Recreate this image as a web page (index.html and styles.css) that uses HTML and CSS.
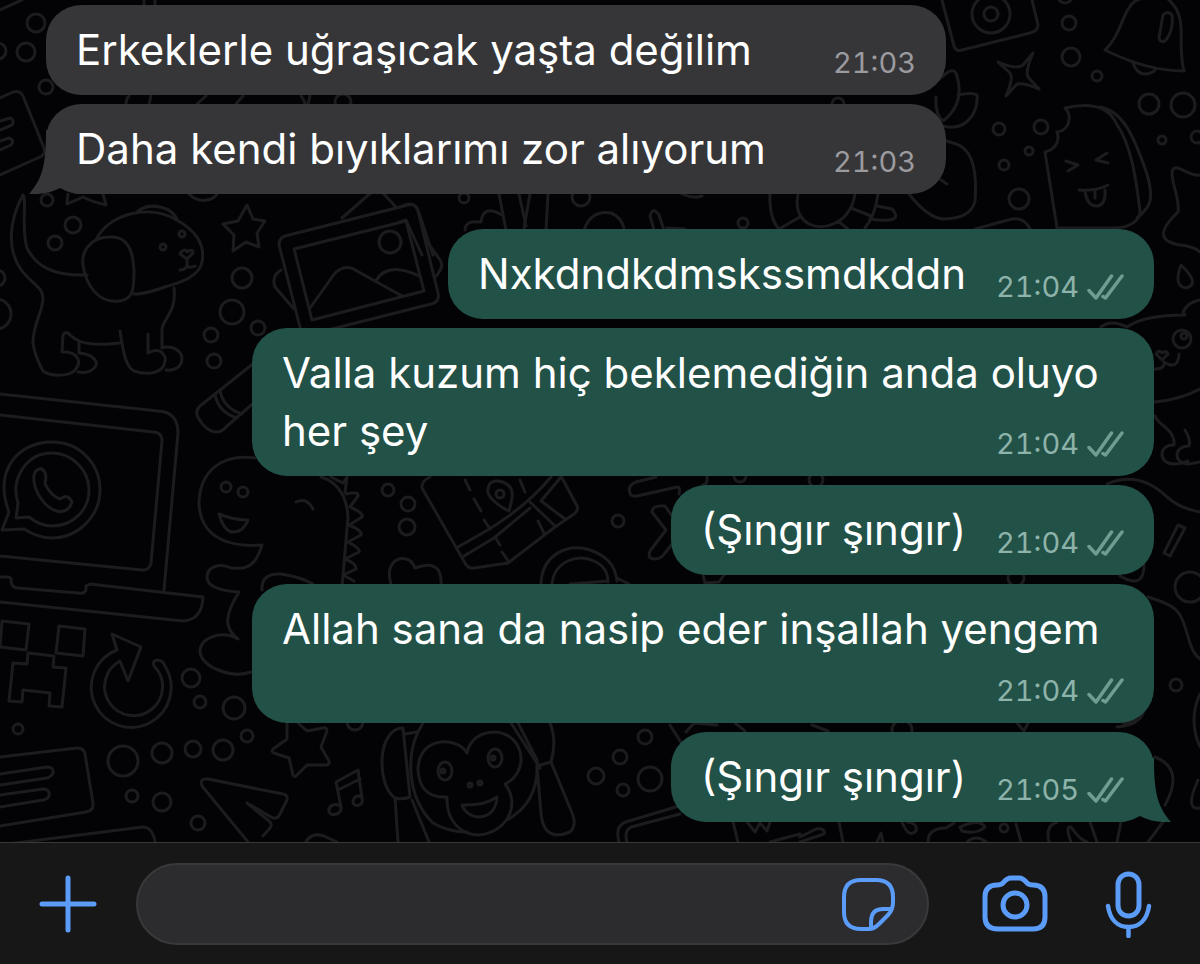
FILE: index.html
```html
<!DOCTYPE html>
<html lang="tr">
<head>
    <meta charset="UTF-8">
    <meta name="viewport" content="width=device-width, initial-scale=1.0">
    <title>Sohbet</title>
    <link rel="stylesheet" href="styles.css">
</head>
<body>
    <svg class="shapes" width="0" height="0" aria-hidden="true">
        <symbol id="checks" viewBox="0 0 38 26">
            <path d="M3 16.500l7 7.500L25.500 2M17 22.500l2.500 1.500L36 2" fill="none" stroke="currentColor" stroke-width="3.500" stroke-linecap="round" stroke-linejoin="round"/>
        </symbol>
        <symbol id="tail" viewBox="0 0 60 64">
            <path d="M17 0C17 34 14 48 0 64Q18 65 31 58Q42 64 52 64L30 30V0Z"/>
        </symbol>
    </svg>

    <main class="chat">
        <!-- Doodle wallpaper -->
        <svg class="wallpaper" viewBox="0 0 1200 842" preserveAspectRatio="xMidYMax slice" aria-hidden="true">
            <!-- dots -->
            <g>
                <circle cx="36" cy="23" r="9"/><circle cx="26" cy="52" r="9"/><circle cx="-2" cy="51" r="8"/><circle cx="46" cy="87" r="7"/>
                <circle cx="47" cy="200" r="6"/><circle cx="73" cy="225" r="8"/><circle cx="55" cy="243" r="7"/>
                <circle cx="242" cy="278" r="10"/><circle cx="232" cy="312" r="12"/><circle cx="258" cy="328" r="7"/><circle cx="211" cy="335" r="7"/><circle cx="214" cy="361" r="7"/>
                <circle cx="-3" cy="278" r="8"/><circle cx="-4" cy="314" r="15"/>
                <circle cx="388" cy="490" r="6"/><circle cx="408" cy="504" r="7"/><circle cx="407" cy="527" r="8"/><circle cx="618" cy="521" r="6"/>
                <circle cx="191" cy="678" r="9"/><circle cx="200" cy="702" r="6"/><circle cx="234" cy="708" r="11"/><circle cx="247" cy="736" r="6"/>
                <circle cx="123" cy="761" r="15"/><circle cx="162" cy="753" r="10"/><circle cx="193" cy="749" r="8"/><circle cx="223" cy="750" r="10"/>
                <circle cx="132" cy="796" r="6"/><circle cx="162" cy="802" r="9"/><circle cx="198" cy="823" r="7"/><circle cx="18" cy="729" r="5"/>
                <circle cx="596" cy="776" r="8"/><circle cx="620" cy="757" r="7"/><circle cx="645" cy="737" r="7"/><circle cx="623" cy="790" r="6"/><circle cx="650" cy="779" r="12"/>
                <circle cx="464" cy="198" r="5"/><circle cx="581" cy="197" r="9"/><circle cx="743" cy="223" r="5"/>
                <circle cx="1065" cy="-4" r="7"/><circle cx="1069" cy="23" r="7"/><circle cx="1071" cy="57" r="9"/><circle cx="1097" cy="76" r="5"/>
                <circle cx="1149" cy="104" r="10"/><circle cx="1183" cy="105" r="12"/><circle cx="1162" cy="140" r="4"/><circle cx="1197" cy="137" r="6"/>
                <circle cx="999" cy="129" r="6"/><circle cx="1041" cy="127" r="7"/><circle cx="1029" cy="151" r="4"/><circle cx="1004" cy="165" r="5"/><circle cx="1019" cy="199" r="10"/>
                <circle cx="1190" cy="587" r="15"/><circle cx="1176" cy="685" r="6"/><circle cx="1004" cy="828" r="4"/>
                <circle cx="816" cy="480" r="7"/><circle cx="740" cy="476" r="6"/><circle cx="1016" cy="578" r="8"/><circle cx="343" cy="102" r="8"/><circle cx="838" cy="104" r="6"/>
                <circle cx="355" cy="722" r="8"/><circle cx="902" cy="730" r="10"/>
            </g>
            <!-- notes and cards on the left edge -->
            <path d="M0 98L13 92q7-2 10 4l21 52q2 6-4 9L0 175M0 121l10-3q5 2 2 7L0 130M0 141l9-3q6 2 2 7L0 150M0 10L22 0"/>
            <path d="M144 0v6M155 0v6M126 104q0-5 3-8M149 104l2-8M197 104l9-8M236 104l7-8M305 104q-1-5-4-8M308 104l2-8"/>
            <!-- dog -->
            <path d="M23 195C8 222 8 250 20 268c11 16 23 19 23 30 0 14-11 28-10 46 2 10 6 20 10 27 8 6 26 5 31 0 9-9 4-20-12-19l1-17q3-5 7 0c11 11 31 10 50 8M79 343v10c15 1 20 10 16 14q-5 7-17 5M23 195c4 3-2 35 4 53 9 18 25 28 60 27M96 240c12-26 54-38 84-18 18 11 25 25 22 40-3 16-25 21-37 25-12 4-24 8-31 7M83 265c-2-14 8-28 27-28 18-1 23 14 24 33 0 17 0 29-14 31-22 3-34-16-37-36zM138 211c12-9 34-5 40 10M174 288c3 25-12 31-12 42v18c10-3 19 2 20 10 0 9-7 13-16 12M120 331c3 19 5 35 14 40 11 4 23 3 29-4 6-11-2-21-15-14v-19"/>
            <circle cx="163" cy="247" r="3"/><circle cx="182" cy="234" r="3"/>
            <path d="M181 252q5-4 6 0 6-4 6 1l-6 6-7-5zM187 259v6q-1 5-7 5M187 265q2 4 8 1"/>
            <path d="M68 194l-1 10 16-7q7 4 23 8l-3-11M189 194q8 8 18 6 7-1 10-6"/>
            <path d="M247 205l6 14 12 2-8 12 2 14-13-5-13 9 1-16-11-11 15-3z"/>
            <!-- photo frame -->
            <path d="M285 236l123-31q8-2 10 6l20 82q2 9-7 11l-123 31q-6 0-8-8l-21-82q0-7 6-9zM294 249l112-28 18 70-112 29zM310 308l25-35q11-10 22-2l45 25M376 281q11-20 43-5M342 218l32-28q5-3 8 2l13 14M281 270q-10 6-6 17l19 22M426 240l14 20q5 7-5 17"/>
            <circle cx="390" cy="242" r="11"/>
            <!-- crayon -->
            <path d="M254 363l-54 43q-6 6-1 13 8 13 17 13 6 0 10-5l30-26M215 394q3 18 22 24M220 390q3 18 22 24"/>
            <!-- laptop -->
            <path d="M0 394l158 17q20 1 20 22l-14 157M0 415l153 17q9 0 9 9l-11 122q-2 8-9 7L0 556M0 577h8q4 0 3 5 1 6 7 6l60 5q9 2 8-7l4-2 113 13q-1 23-20 24L0 602"/>
            <path d="M2 530l7-18C-7 469 19 442 52 442c27 0 48 21 48 48s-23 48-48 48q-14 0-28-9zM16 518l2-15C10 478 27 453 52 453c19 0 37 16 37 37 0 21-17 36-37 36q-12 0-23-9zM34 475q2-7 8-6c5 4 4 9 3 15q6 12 15 15c6-4 9-3 12 3-2 7-8 11-15 9-12-3-25-21-23-36z"/>
            <!-- dinosaur -->
            <path d="M255 458c-33-4-55 12-56 45 1 30 23 45 63 42-6 20-14 25-31 23-13-6-24 0-24 9 0 10 14 14 32 15-15 24-15 36-1 47-16-9-37-2-38 12 0 15 30 28 51 21M262 590q-1-17 19-16 20 3 32 10M321 477c17 5 26 20 27 40l-6 70M331 477l12 6 4-6-2 15M346 494q13-3 12 2l-8 11q14 6 12 10l-13 8q14 6 12 10l-13 7q13 7 11 10l-14 7q12 5 11 10l-13 6 11 6M296 502q11-5 17 7M219 514q14 6 29 6-5 13-17 12-8-3-12-18z"/>
            <circle cx="226" cy="487" r="5"/><circle cx="243" cy="492" r="5"/>
            <!-- pixel face -->
            <path d="M2 621l27 3-3 26-26-3zM59 626l26 3-2 27-27-3zM28 653l26 3-1 11 13 1-4 39-13-1 1-13-27-3-1 12-13-1 4-38 14 1z"/>
            <!-- reload arrow -->
            <path d="M112 634L141 647 128 681 120 661A29 29 0 1 0 154 666Q152 661 157 660 163 660 165 666A40 40 0 1 1 117 650Z"/>
            <!-- card -->
            <path d="M0 757l77-9q7 0 8 6l8 49q1 8-7 9L0 826M0 774l47-7q7 0 6 6-1 3-6 5L0 785M0 795l43-6q7 0 6 7-1 3-6 4L0 807M0 845l143-18q9 0 12 14"/>
            <!-- star, pointer, notes -->
            <path d="M287 723v16l-14 10q-2 3 1 4l15 5 4 17q2 3 4 0l10-10 20 0q3-1 2-4l-8-14 6-16q0-4-4-3l-16 3-9-8M248 842L202 786q-3-8 6-7l75 15q5 1 4 6l-8 16q-3 4-8 1l-24-14 22 18q4 3 1 7l-7 8"/>
            <path d="M341 807l-5-25 22-12 4 28M338 790l22-11M341 807c1 7-9 10-12 5-1-7 8-10 12-5zM362 798c2 7-6 10-9 5 0-7 6-9 9-5zM306 842q5-10 18-6l13 6"/>
            <!-- monkey -->
            <path d="M395 798C376 785 377 728 403 728L410 797Q402 800 395 798ZM395 798L398 842M412 800L429 842M405 734L417 732"/>
            <path d="M423 723C404 752 407 798 433 823Q448 832 467 832M511 723L540 768M518 723L537 760Q540 802 507 820"/>
            <path d="M467 753C457 736 418 736 418 770 419 790 430 798 447 797 446 820 460 835 479 835 505 833 522 806 505 784 530 772 525 734 495 732 478 732 469 742 467 753ZM462 805Q484 806 497 797C496 822 468 822 462 805Z"/>
            <path d="M550 723C557 740 553 755 551 762L537 766 541 813C543 838 558 837 570 832 577 825 574 817 570 808L551 762"/>
            <ellipse cx="445" cy="771" rx="7" ry="9"/><ellipse cx="495" cy="758" rx="7" ry="9"/>
            <circle cx="443" cy="771" r="2"/><circle cx="493" cy="758" r="2"/><circle cx="470" cy="785" r="2"/><circle cx="480" cy="783" r="2"/>
            <!-- map -->
            <path d="M430 477q-9 4-8 11l43 75q3 6 9 5l34-5 47-36 19-13q5-4 3-8l-16-30M458 547l28-16q40-24 65-54M464 556l30-18 36-30M561 477l-20 24 24 18M530 502l25 24M465 480l5 10M474 499l7 12M484 520l6 9M495 537l5 8M502 552l7 10M520 480l5 12M538 521l6 12M509 511c-11-5-23-15-21-22 1-10 12-10 20-4 7 5 4 15 1 26z"/>
            <circle cx="500" cy="494" r="4"/>
            <!-- heart and bag -->
            <path d="M391 584c-6-20 6-27 15-25q6 1 9 9c19-7 27 0 26 16M541 584c1-30 27-41 49-34 17 6 25 15 27 31M552 584c2-22 25-31 42-23 11 5 14 13 14 21M570 584l38-3M617 578l12 6"/>
            <path d="M636 482q-9 4-6 11 1 4 7 3l40-9q4 0 2 7M636 482l20-5M672 516l-7-10q-13-1-13 6l14 18-16 21q-3 8 5 8 6 0 10-6l8-10M707 477q1 7-4 8M703 575l2 8 14-1 5-7"/>
            <!-- shapes between the bubbles -->
            <path d="M400 207q13-7 18 3l15 45M400 222l6-2 16 35M499 194l7 36M519 194l7 32M530 194l-6 34M548 194l-2 36M465 230q0-10 16-8 2-18 21-7M584 230q7-20 27-17 10 4 13 15M654 230l-4-14q3-10 9-1l5 15M667 228l18 1M682 194q11 5 20 2"/>
            <path d="M770 194q-1 24 9 35l21-12M798 195q-4 20 11 29c15 7 41 0 46-30M851 208l20 8M838 221l10 8M878 194q-3 22-13 34M877 206l15 3c10 11-1 13-22 10"/>
            <path d="M909 194q17 22 33 25 29 0 33-18c2-28-1-53-22-58l-10-3M941 180l6 4M936 97q-1 18 7 24 22-17 14-45-2-8-9-4l-18 14M943 126q18 5 29-10 6-10 5-21-5-3-19 0M975 229l37-10q12-2 18 10"/>
            <!-- camera, sparkle, bell -->
            <path d="M942 0l12 46q2 6 8 4l68-17q8-2 8-8L1032 0"/><circle cx="991" cy="14" r="19"/><circle cx="991" cy="14" r="7"/>
            <path d="M998 62q18 8 25 3l10-12q-8 18-5 24l11 12q-14-6-22-5l-11 12q8-18 4-23zM1105 50c17-16 17-39 30-49q10-4 15-5 8-5 18 3c22 19 8 44 16 72-20 0-45-4-79-21zM1133 63q4 12 14 11 9-2 8-6M1163 15q5-5 9 0 2 16-7 26-5 2-6-3z"/>
            <!-- ice cream -->
            <path d="M1057 228l-12-76c8-2 16-9 12-20 12-1 16-16 8-24q40-9 51 15c17 24 21 65 24 88 0 10-10 16-24 17zM1100 107c22 4 33 26 47 67q6 21 2 30-4 8-12 14M1066 161l12 4-10 6M1107 153l-11 7 12 3M1079 190q18 1 29-5M1085 191q2 16 13 15 8-2 7-16M1095 191v7"/>
            <!-- right edge: splash, drop, cat -->
            <path d="M1200 175c-13 2-25-15-28-3 0 15 8 26 6 40-23 22-16 30 2 33q13 1 20 7M1181 265q-8 21 5 23 15-4-5-23z"/>
            <path d="M1101 327q10-8 26 0 17-12 58-12l-2-3q5-10 17-12M1154 402q25-2 46-13M1155 416c3 10 20 12 19 29-16-1-16 19 0 19 7 0 9-1 14-3M1185 430q6 10 4 16c-16 0-16 18 0 18l11-2M1155 369q10 0 9-7 14 9 15-8M1156 354q3-5 6-1 5-3 6 1l-6 6z"/>
            <ellipse cx="1182" cy="339" rx="9" ry="9"/><circle cx="1184" cy="336" r="3"/>
            <path d="M1107 484q32-14 60 13 14 12 33 15M1178 525l7 3-15 28-6-3zM1120 576q24 14 24-11M1148 597c32 10 32 13 41 43q4 14 11 19M1117 727q30-2 27-26M1123 723q17 1 17-23M1200 694q-12 26 0 53M1155 757q30 12 10 48M1198 780q-14 31 2 28"/>
            <!-- bottom row -->
            <path d="M619 842q-5-18 10-21l50-15M627 842q-4-14 8-16l45-12M733 822l5 20M747 822l8 10 5-9 7 8 3-9M770 842l30-8M800 837l16-8q10-1 8 5l-24 8M839 822l4 20M877 842l4-9 2 9M902 822q7 17 14 9 2-8-9-9M928 842q0-14 18-14l8-5M960 827q20-9 25 0-9 8-23 4zM967 842q9-8 19 0M1016 824l5 18M1049 842q-4-16 8-20M1071 842q-6-16 0-15 9 13 16 15M1090 822l7 20M1121 822l-4 20M1148 842l15-20M670 725l12 19M686 732l8-9 23 2M735 723l10 8M812 725l16 6M1017 723l7 8 4-8"/>
        </svg>

        <div class="message received">
            <p class="text">Erkeklerle uğraşıcak yaşta değilim <span class="meta"><time>21:03</time></span></p>
        </div>
        <div class="message received">
            <p class="text">Daha kendi bıyıklarımı zor alıyorum <span class="meta"><time>21:03</time></span></p>
            <svg class="tail" aria-hidden="true"><use href="#tail"/></svg>
        </div>

        <div class="message sent">
            <p class="text">Nxkdndkdmskssmdkddn <span class="meta"><time>21:04</time><svg class="checks"><use href="#checks"/></svg></span></p>
        </div>
        <div class="message sent">
            <p class="text">Valla kuzum hiç beklemediğin anda oluyo her şey <span class="meta"><time>21:04</time><svg class="checks"><use href="#checks"/></svg></span></p>
        </div>
        <div class="message sent">
            <p class="text">(Şıngır şıngır) <span class="meta"><time>21:04</time><svg class="checks"><use href="#checks"/></svg></span></p>
        </div>
        <div class="message sent">
            <p class="text">Allah sana da nasip eder inşallah yengem <span class="meta own-line"><time>21:04</time><svg class="checks"><use href="#checks"/></svg></span></p>
        </div>
        <div class="message sent">
            <p class="text">(Şıngır şıngır) <span class="meta"><time>21:05</time><svg class="checks"><use href="#checks"/></svg></span></p>
            <svg class="tail" aria-hidden="true"><use href="#tail"/></svg>
        </div>
    </main>

    <form class="composer">
        <button class="icon-button" type="button" aria-label="Ekle">
            <svg width="64" height="64" viewBox="0 0 64 64"><path d="M32 6v52M6 32h52" stroke-width="5"/></svg>
        </button>
        <div class="field">
            <input type="text" aria-label="Mesaj">
            <button class="icon-button" type="button" aria-label="Çıkartma">
                <svg width="56" height="56" viewBox="0 0 56 56"><path d="M29 53H21Q4 53 4 36V21Q4 4 21 4H36Q53 4 53 21V26Q53 34 48 39L39 48Q34 53 29 53ZM31 52V46Q31 33 43 33H51" stroke-width="4"/></svg>
            </button>
        </div>
        <div class="actions">
            <button class="icon-button" type="button" aria-label="Kamera">
                <svg width="68" height="68" viewBox="0 0 68 68"><path d="M16 15Q20 15 22 13Q26 8 30 8H38Q42 8 46 13Q48 15 52 15Q64 15 64 27V47Q64 59 52 59H17Q4 59 4 47V27Q4 15 16 15Z" stroke-width="5"/><circle cx="34" cy="35" r="12" stroke-width="5"/></svg>
            </button>
            <button class="icon-button" type="button" aria-label="Sesli mesaj">
                <svg width="48" height="68" viewBox="0 0 48 68"><rect x="14" y="4" width="21" height="42" rx="10.500" stroke-width="5"/><path d="M4 36C6 50 14 57 24.500 57S43 50 45 36M24.500 57v9" stroke-width="4.500"/></svg>
            </button>
        </div>
    </form>
</body>
</html>
```
FILE: styles.css
```css
* {
    box-sizing: border-box;
}

body {
    margin: 0;
    min-height: 100vh;
    display: flex;
    flex-direction: column;
    background: #030305;
    color: #fff;
    font-family: Inter, "Noto Sans", sans-serif;
}

.shapes {
    position: absolute;
}

.chat {
    position: relative;
    flex: 1;
    display: flex;
    flex-direction: column;
    gap: 9px;
    padding: 5px 46px 20px;
    overflow: hidden;
}

/* Wallpaper lies behind the messages */
.wallpaper {
    position: absolute;
    top: 0;
    left: 0;
    width: 100%;
    height: 100%;
    fill: none;
    stroke: #1c1c1e;
    stroke-width: 3;
    stroke-linecap: round;
    stroke-linejoin: round;
}

.message {
    position: relative;
    max-width: calc(100% - 206px);
    padding: 16px 30px;
    border-radius: 35px;
}

.received {
    align-self: flex-start;
    width: 900px;
    background: #363638;
    color: #fff;
}

.sent {
    align-self: flex-end;
    background: #225147;
}

.received + .sent {
    margin-top: 26px;
}

.text {
    display: flow-root;
    margin: 0;
    font-size: 42px;
    line-height: 58px;
}

.meta {
    float: right;
    display: flex;
    align-items: center;
    gap: 7px;
    height: 32px;
    margin-top: 26px;
    margin-left: 30px;
    font-size: 29px;
    line-height: 32px;
    font-variant-numeric: tabular-nums;
    color: #9b9b9f;
}

.own-line {
    margin-top: 17px;
}

.sent .meta {
    color: #8db3aa;
}

.checks {
    width: 38px;
    height: 26px;
    color: #6f9d92;
}

.tail {
    position: absolute;
    bottom: 0;
    width: 60px;
    height: 64px;
}

.received .tail {
    left: -17px;
    fill: #363638;
}

.sent .tail {
    right: -17px;
    fill: #225147;
    transform: scaleX(-1);
}

.composer {
    position: relative;
    display: flex;
    align-items: center;
    gap: 36px;
    padding: 20px 48px 19px 36px;
    border-top: 1px solid #39393b;
    background: #171717;
}

.icon-button {
    display: flex;
    padding: 0;
    border: none;
    background: none;
    cursor: pointer;
}

.icon-button svg {
    fill: none;
    stroke: #5a9cf8;
    stroke-linecap: round;
    stroke-linejoin: round;
}

.field {
    flex: 1;
    min-width: 0;
    display: flex;
    align-items: center;
    height: 82px;
    padding: 0 31px;
    border: 2px solid #39393b;
    border-radius: 41px;
    background: #2c2c2e;
}

.field input {
    flex: 1;
    min-width: 0;
    height: 58px;
    padding: 0;
    border: none;
    outline: none;
    background: none;
    color: #fff;
    font-family: inherit;
    font-size: 42px;
}

.actions {
    display: flex;
    align-items: center;
    gap: 55px;
    margin-left: 16px;
}
```
